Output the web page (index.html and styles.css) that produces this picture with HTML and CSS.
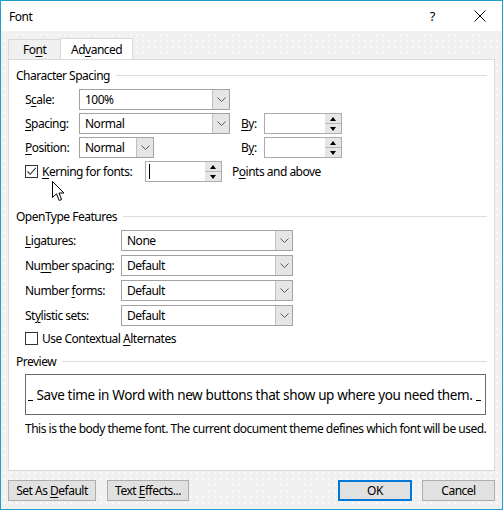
FILE: index.html
```html
<!DOCTYPE html>
<html lang="en">
<head>
<meta charset="utf-8">
<title>Font</title>
<link rel="stylesheet" href="styles.css">
</head>
<body>
<div class="window">
  <div class="titlebar">
    <span class="title">Font</span>
    <span class="help">?</span>
    <svg class="close" width="12" height="12" viewBox="0 0 12 12"><path d="M0.5 0.5 L11.5 11.5 M11.5 0.5 L0.5 11.5" stroke="#000" stroke-width="1" fill="none"/></svg>
  </div>

  <div class="body">
    <div class="tabs">
      <div class="tab">Fo<u>n</u>t</div>
      <div class="tab active">Ad<u>v</u>anced</div>
    </div>

    <div class="panel">
      <div class="group-title"><span>Character Spacing</span></div>

      <div class="row cs-row first">
        <span class="label cs-label">S<u>c</u>ale:</span>
        <div class="select w-scale"><span class="value">100%</span><span class="drop"><svg width="9" height="5" viewBox="0 0 9 5"><path d="M0.5 0.5 L4.5 4.5 L8.5 0.5" stroke="#5a5a5a" fill="none"/></svg></span></div>
      </div>

      <div class="row cs-row">
        <span class="label cs-label"><u>S</u>pacing:</span>
        <div class="select w-scale"><span class="value">Normal</span><span class="drop"><svg width="9" height="5" viewBox="0 0 9 5"><path d="M0.5 0.5 L4.5 4.5 L8.5 0.5" stroke="#5a5a5a" fill="none"/></svg></span></div>
        <span class="by"><u>B</u>y:</span>
        <div class="spin w-by"><span class="field"></span><span class="arrows"><span class="up"></span><span class="down"></span></span></div>
      </div>

      <div class="row cs-row">
        <span class="label cs-label"><u>P</u>osition:</span>
        <div class="select w-pos"><span class="value">Normal</span><span class="drop"><svg width="9" height="5" viewBox="0 0 9 5"><path d="M0.5 0.5 L4.5 4.5 L8.5 0.5" stroke="#5a5a5a" fill="none"/></svg></span></div>
        <span class="by pos-by">B<u>y</u>:</span>
        <div class="spin w-by"><span class="field"></span><span class="arrows"><span class="up"></span><span class="down"></span></span></div>
      </div>

      <div class="row kern-row">
        <span class="check checked"><svg width="11" height="11" viewBox="0 0 11 11"><path d="M1.5 5.5 L4.2 8.3 L9.8 1.8" stroke="#333" stroke-width="1.1" fill="none"/></svg></span>
        <span class="kern-label"><u>K</u>erning for fonts:</span>
        <div class="spin w-kern"><span class="field"><span class="caret"></span></span><span class="arrows"><span class="up"></span><span class="down"></span></span></div>
        <span class="points">P<u>o</u>ints and above</span>
        <svg class="pointer" width="13" height="21" viewBox="0 0 13 21"><path d="M0.5 0.5 L0.5 16.5 L4.5 12.8 L7.2 19.5 L9.6 18.5 L7 12 L12 12 Z" fill="#fff" stroke="#000" stroke-width="1" stroke-linejoin="miter"/></svg>
      </div>

      <div class="group-title ot"><span>OpenType Features</span></div>

      <div class="row ot-row first">
        <span class="label ot-label"><u>L</u>igatures:</span>
        <div class="select w-ot"><span class="value">None</span><span class="drop"><svg width="9" height="5" viewBox="0 0 9 5"><path d="M0.5 0.5 L4.5 4.5 L8.5 0.5" stroke="#5a5a5a" fill="none"/></svg></span></div>
      </div>
      <div class="row ot-row">
        <span class="label ot-label">Nu<u>m</u>ber spacing:</span>
        <div class="select w-ot"><span class="value">Default</span><span class="drop"><svg width="9" height="5" viewBox="0 0 9 5"><path d="M0.5 0.5 L4.5 4.5 L8.5 0.5" stroke="#5a5a5a" fill="none"/></svg></span></div>
      </div>
      <div class="row ot-row">
        <span class="label ot-label">Number <u>f</u>orms:</span>
        <div class="select w-ot"><span class="value">Default</span><span class="drop"><svg width="9" height="5" viewBox="0 0 9 5"><path d="M0.5 0.5 L4.5 4.5 L8.5 0.5" stroke="#5a5a5a" fill="none"/></svg></span></div>
      </div>
      <div class="row ot-row">
        <span class="label ot-label">St<u>y</u>listic sets:</span>
        <div class="select w-ot"><span class="value">Default</span><span class="drop"><svg width="9" height="5" viewBox="0 0 9 5"><path d="M0.5 0.5 L4.5 4.5 L8.5 0.5" stroke="#5a5a5a" fill="none"/></svg></span></div>
      </div>

      <div class="row alt-row">
        <span class="check"></span>
        <span class="kern-label">Use Contextual <u>A</u>lternates</span>
      </div>

      <div class="group-title pv"><span>Preview</span></div>
      <div class="preview">
        <span class="mark"></span>
        <span class="sample">Save time in Word with new buttons that show up where you need them.</span>
        <span class="mark"></span>
      </div>
      <p class="note">This is the body theme font. The current document theme defines which font will be used.</p>
    </div>

    <div class="footer">
      <button class="btn b-default">Set As <u>D</u>efault</button>
      <button class="btn b-effects">Text <u>E</u>ffects...</button>
      <span class="spacer"></span>
      <button class="btn b-ok primary">OK</button>
      <button class="btn b-cancel">Cancel</button>
    </div>
  </div>
</div>
</body>
</html>
```

FILE: styles.css
```css
* { box-sizing: border-box; }

html, body {
  margin: 0;
  padding: 0;
  background: #fff;
}

body {
  font-family: "Noto Sans", "Open Sans", sans-serif;
  font-size: 12px;
  letter-spacing: -0.5px;
  color: #000;
}

u { text-decoration: underline; text-underline-offset: 2px; }

.window {
  width: 503px;
  height: 510px;
  border: 1px solid #1e9fcc;
  display: flex;
  flex-direction: column;
  background: #f0f0f0;
}

/* title bar */
.titlebar {
  height: 30px;
  background: #fff;
  display: flex;
  align-items: center;
  padding-left: 8px;
  flex: none;
}
.title { font-size: 12px; flex: 1; }
.help { font-size: 13px; margin-right: 39px; }
.close { margin-right: 16px; }

/* dialog body */
.body {
  flex: 1;
  display: flex;
  flex-direction: column;
  padding: 0 7px;
  background-color: #f0f0f0;
  background-image: radial-gradient(circle, rgba(255,255,255,0.9) 0.6px, transparent 0.9px);
  background-size: 6px 6px;
  background-position: 1px 1px;
}

.tabs {
  display: flex;
  align-items: flex-end;
  height: 28px;
}
.tab {
  height: 20px;
  line-height: 19px;
  border: 1px solid #d9d9d9;
  border-bottom: none;
  background: #f0f0f0;
}
.tab:first-child { border-right: none; width: 52px; padding: 0 0 0 14px; }
.tab.active {
  height: 22px;
  background: #fff;
  padding: 0 10px;
  line-height: 21px;
  margin-bottom: -1px;
  position: relative;
  border-left: 1px solid #d9d9d9;
}

.panel {
  background: #fff;
  border: 1px solid #d9d9d9;
  height: 412px;
  padding: 7px 7px 0 7px;
  position: relative;
}

.group-title {
  display: flex;
  align-items: center;
  height: 16px;
}
.group-title span { white-space: nowrap; padding-right: 6px; }
.group-title::after {
  content: "";
  flex: 1;
  border-top: 1px solid #dcdcdc;
  margin-top: 1px;
}

.row {
  display: flex;
  align-items: center;
  padding-left: 9px;
  height: 21px;
  position: relative;
}
.cs-row { margin-top: 3px; }
.cs-row.first { margin-top: 6px; }
.kern-row { margin-top: 3px; height: 20px; }

.label { white-space: nowrap; }
.cs-label { width: 54px; }
.ot-label { width: 96px; }

.select {
  height: 21px;
  border: 1px solid #a2a2a2;
  display: flex;
  align-items: stretch;
  background: #fff;
}
.select .value { flex: 1; padding-left: 5px; line-height: 19px; }
.select .drop {
  width: 17px;
  background: #e5e5e5;
  border-left: 1px solid #bfbfbf;
  display: flex;
  align-items: center;
  justify-content: center;
}
.w-scale { width: 151px; }
.w-pos { width: 75px; }
.w-ot { width: 172px; }

.by { margin-left: 11px; width: 23px; }
.pos-by { margin-left: 87px; }

.spin {
  height: 21px;
  border: 1px solid #ababab;
  display: flex;
  background: #fff;
}
.spin .field { flex: 1; position: relative; }
.spin .arrows {
  width: 16px;
  background: #e6e6e6;
  display: flex;
  flex-direction: column;
}
.spin .up, .spin .down {
  flex: 1;
  position: relative;
}
.spin .up { border-bottom: 1px solid #b5b5b5; }
.spin .up::after, .spin .down::after {
  content: "";
  position: absolute;
  left: 5px;
  width: 0;
  height: 0;
  border-left: 3px solid transparent;
  border-right: 3px solid transparent;
}
.spin .up::after { top: 3px; border-bottom: 4px solid #000; }
.spin .down::after { top: 3px; border-top: 4px solid #000; }
.w-by { width: 78px; }
.w-kern { width: 77px; }

.caret {
  position: absolute;
  left: 3px;
  top: 2px;
  width: 1px;
  height: 15px;
  background: #000;
}

.check {
  width: 13px;
  height: 13px;
  border: 1px solid #333;
  background: #fff;
  display: flex;
  align-items: center;
  justify-content: center;
  flex: none;
}
.kern-label { margin-left: 4px; width: 103px; white-space: nowrap; }
.points { margin-left: 10px; }

.pointer {
  position: absolute;
  left: 36px;
  top: 20px;
}

.group-title.ot { margin-top: 27px; }
.ot-row { margin-top: 4px; }
.ot-row.first { margin-top: 6px; }
.alt-row { margin-top: 5px; height: 14px; }

.group-title.pv { margin-top: 8px; }

.preview {
  margin: 5px 0 0 9px;
  width: 461px;
  height: 41px;
  border: 1px solid #6b6b6b;
  display: flex;
  align-items: center;
  justify-content: space-between;
  padding: 0 4px 0 2px;
}
.preview .sample { font-size: 13.5px; letter-spacing: -0.35px; white-space: nowrap; }
.preview .mark {
  width: 5px;
  height: 1px;
  background: #000;
  margin-top: 12px;
}

.note {
  margin: 5px 0 0 9px;
  white-space: nowrap;
}

/* bottom buttons */
.footer {
  display: flex;
  align-items: center;
  margin-top: 9px;
}
.spacer { flex: 1; }
.btn {
  font-family: inherit;
  font-size: 12px;
  letter-spacing: -0.5px;
  height: 21px;
  background: #e1e1e1;
  border: 1px solid #adadad;
  padding: 0;
  color: #000;
}
.b-default { width: 88px; }
.b-effects { width: 82px; margin-left: 11px; }
.b-ok { width: 74px; border: 2px solid #0078d7; }
.b-cancel { width: 73px; margin-left: 10px; }
```
